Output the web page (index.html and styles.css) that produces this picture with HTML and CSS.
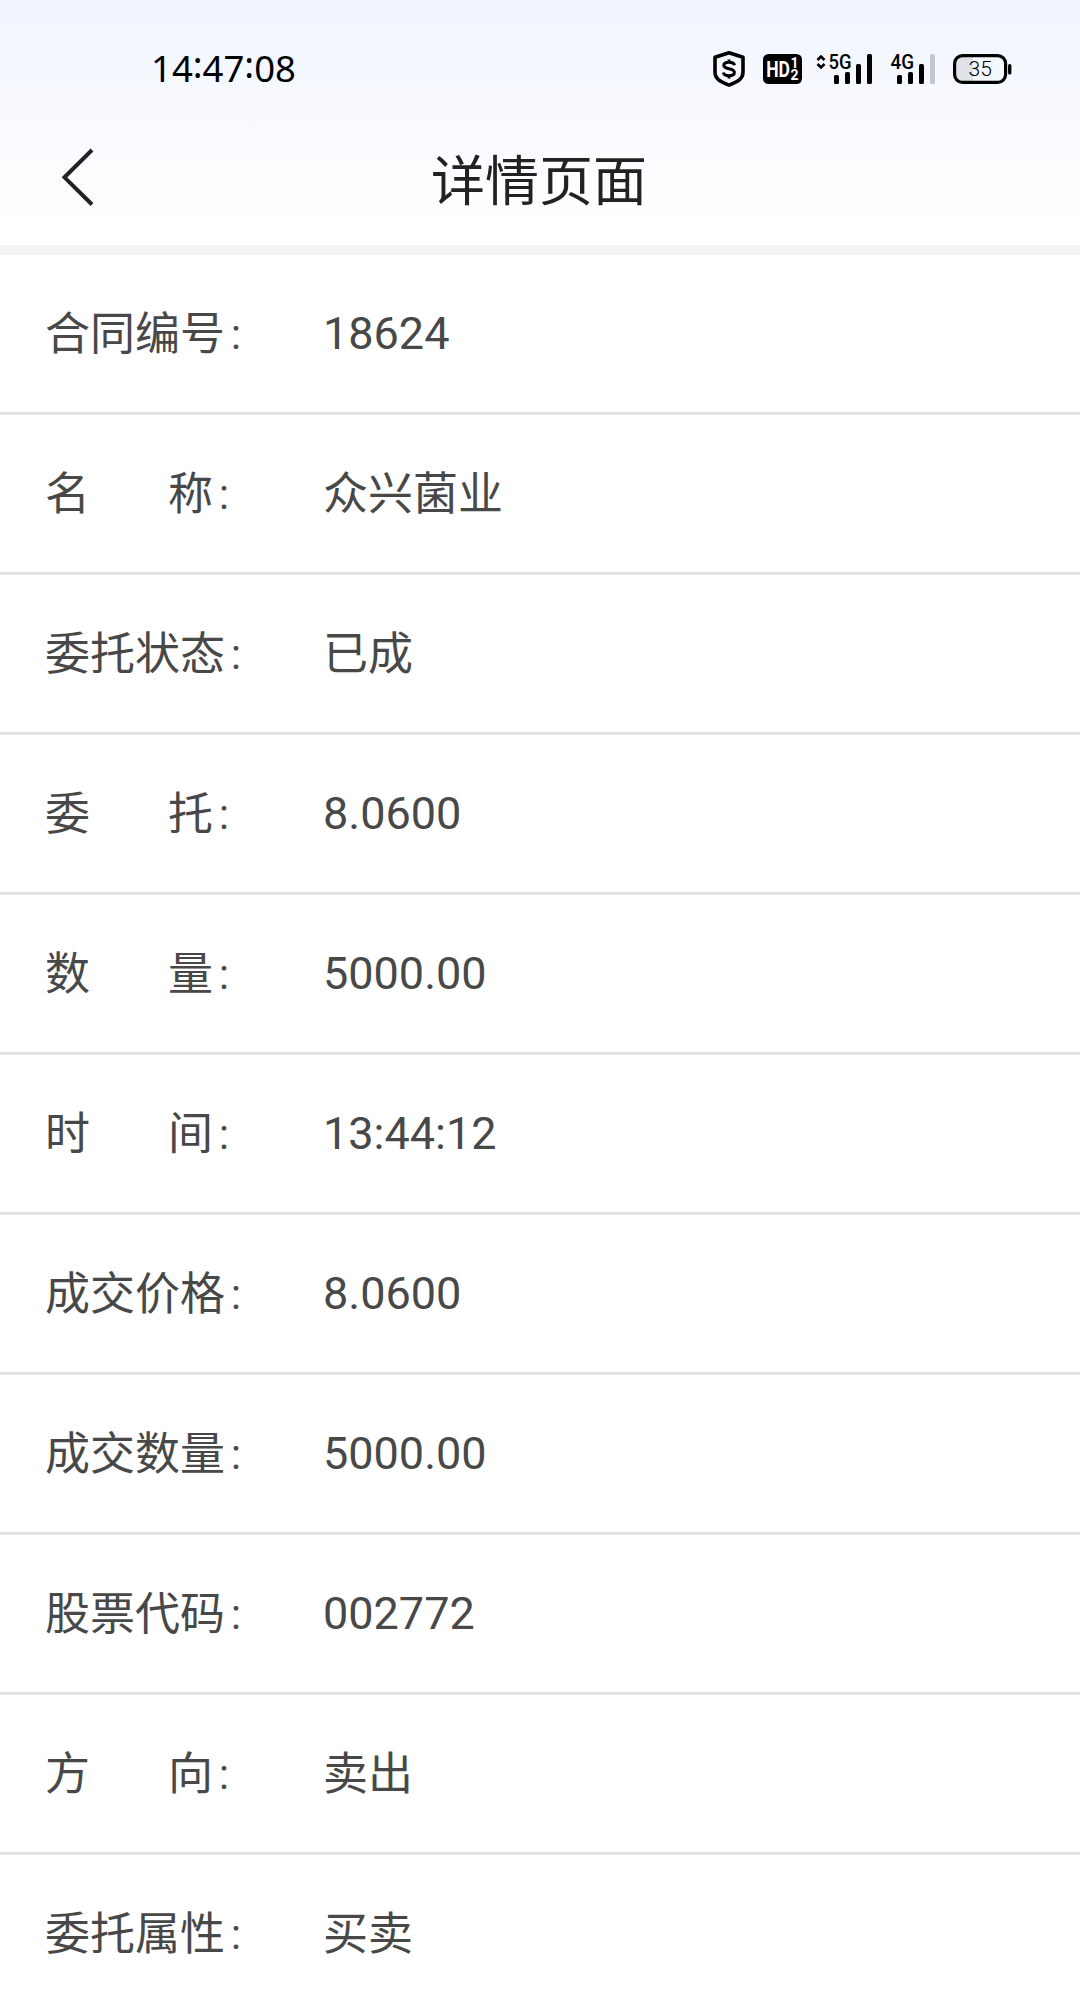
FILE: index.html
```
<!DOCTYPE html>
<html lang="zh-CN">

<head>
    <meta charset="UTF-8">
    <meta name="viewport" content="width=device-width, initial-scale=1.0">
    <title>详情页面</title>
    <link rel="stylesheet" href="styles.css">
</head>

<body>
    <header class="header">
        <div class="status">
            <div class="time">14<span class="colon">:</span>47<span class="colon">:</span>08</div>
            <div class="icons">
                <svg class="shield" width="34" height="38" viewBox="0 0 34 38">
                    <path d="M17 2.8 L31 7.3 V22 C31 29 26 31.5 17 35.2 C8 31.5 3 29 3 22 V7.3 Z" fill="none" stroke="#000" stroke-width="3.6" stroke-linejoin="round" />
                    <path d="M22.5 15.2 C22 12.6 19.8 12.2 17 12.2 C13.5 12.2 11.8 13.3 11.8 15.3 C11.8 17.7 14 18.2 17 18.8 C20.3 19.4 22.4 20.2 22.4 22.6 C22.4 24.8 20.3 25.8 17 25.8 C14 25.8 11.8 25 11.4 22.6 M17 9.5 V12 M17 26 V28.5" fill="none" stroke="#000" stroke-width="3" />
                </svg>
                <svg class="hd" width="39" height="30" viewBox="0 0 39 30">
                    <rect width="39" height="30" rx="5.5" />
                    <g fill="#fff" font-weight="700">
                        <text x="3.2" y="22.7" font-size="21.5" textLength="23.8" lengthAdjust="spacingAndGlyphs">HD</text>
                        <text x="27.4" y="14" font-size="14">1</text>
                        <text x="27.4" y="25.5" font-size="14">2</text>
                    </g>
                </svg>
                <svg class="signal5" width="57" height="30" viewBox="0 0 57 30">
                    <path d="M1.5 6 L5 2.5 L8.5 6 M1.5 10 L5 13.5 L8.5 10" fill="none" stroke="#000" stroke-width="2.6" />
                    <text x="12.5" y="14.5" font-size="20" font-weight="500" textLength="23" lengthAdjust="spacingAndGlyphs">5G</text>
                    <rect x="18" y="21" width="5" height="9" rx="1.6" />
                    <rect x="29" y="18" width="5" height="12" rx="1.6" />
                    <rect x="40" y="10" width="5" height="20" rx="1.6" />
                    <rect x="51" y="0" width="5" height="30" rx="1.6" />
                </svg>
                <svg class="signal4" width="45" height="30" viewBox="0 0 45 30">
                    <text x="0.5" y="14.5" font-size="20" font-weight="500" textLength="23.5" lengthAdjust="spacingAndGlyphs">4G</text>
                    <rect x="7" y="21" width="5" height="9" rx="1.6" />
                    <rect x="18" y="18" width="5" height="12" rx="1.6" />
                    <rect x="29" y="10" width="5" height="20" rx="1.6" />
                    <rect x="40" y="0" width="5" height="30" rx="1.6" fill="#c3c6cc" />
                </svg>
                <svg class="battery" width="59" height="30" viewBox="0 0 59 30">
                    <path d="M10 2 H20 V28 H10 Q2 28 2 20 V10 Q2 2 10 2 Z" fill="#dfe2e7" />
                    <rect x="1.6" y="1.6" width="51" height="26.8" rx="8" fill="none" stroke="#000" stroke-width="3.2" />
                    <rect x="55" y="10" width="3.4" height="10.5" rx="1.5" />
                    <text x="15.5" y="22" font-size="21" font-weight="300" textLength="23.5">35</text>
                </svg>
            </div>
        </div>
        <div class="nav">
            <svg class="back" width="34" height="60" viewBox="0 0 34 60">
                <path d="M32 3 L4.5 30.3 L32 57.5" fill="none" stroke="#222" stroke-width="4" />
            </svg>
            <h1 class="title">详情页面</h1>
        </div>
    </header>
    <main class="list">
        <div class="row"><div class="label">合同编号<span class="mark">：</span></div><div class="value">18624</div></div>
        <div class="row"><div class="label"><span class="wide">名</span>称<span class="mark">：</span></div><div class="value cn">众兴菌业</div></div>
        <div class="row"><div class="label">委托状态<span class="mark">：</span></div><div class="value cn">已成</div></div>
        <div class="row"><div class="label"><span class="wide">委</span>托<span class="mark">：</span></div><div class="value">8.0600</div></div>
        <div class="row"><div class="label"><span class="wide">数</span>量<span class="mark">：</span></div><div class="value">5000.00</div></div>
        <div class="row"><div class="label"><span class="wide">时</span>间<span class="mark">：</span></div><div class="value">13:44:12</div></div>
        <div class="row"><div class="label">成交价格<span class="mark">：</span></div><div class="value">8.0600</div></div>
        <div class="row"><div class="label">成交数量<span class="mark">：</span></div><div class="value">5000.00</div></div>
        <div class="row"><div class="label">股票代码<span class="mark">：</span></div><div class="value">002772</div></div>
        <div class="row"><div class="label"><span class="wide">方</span>向<span class="mark">：</span></div><div class="value cn">卖出</div></div>
        <div class="row"><div class="label">委托属性<span class="mark">：</span></div><div class="value cn">买卖</div></div>
    </main>
</body>

</html>
```
FILE: styles.css
```
* {
    box-sizing: border-box;
    margin: 0;
    padding: 0;
}

body {
    width: 1080px;
    height: 1999px;
    overflow: hidden;
    background: #fff;
    color: #484848;
    font-family: Roboto, "Noto Sans CJK SC", sans-serif;
}

svg {
    overflow: visible;
}

.header {
    height: 255px;
    border-bottom: 10px solid #f4f4f4;
    background: linear-gradient(#eff4ff, #f8faff 45%, #fff 95%);
}

.status {
    display: flex;
    justify-content: space-between;
    height: 110px;
    padding: 46px 68px 0 151px;
}

.time {
    color: #000;
    font: 36.5px/36px "Noto Sans", sans-serif;
}

.colon {
    vertical-align: 4px;
    line-height: 1;
}

.icons {
    display: flex;
    align-items: flex-start;
    padding-top: 8px;
}

.shield {
    margin: -4px 17px 0 0;
}

.hd {
    margin-right: 14px;
}

.signal5 {
    margin-right: 17px;
}

.signal4 {
    margin-right: 18px;
}

.nav {
    display: flex;
    align-items: center;
    height: 135px;
    padding: 0 60px;
}

.back {
    margin-top: -2px;
}

.title {
    flex: 1;
    margin: 10px 36px 0 0;
    color: #222;
    font-size: 54px;
    font-weight: 400;
    line-height: 80px;
    text-align: center;
}

.row {
    display: flex;
    align-items: center;
    height: 160px;
    padding-left: 45px;
    border-bottom: 3px solid #e2e2e2;
    font-size: 45px;
    line-height: 66px;
}

.label {
    width: 278px;
    padding-top: 3px;
    white-space: nowrap;
}

.cn {
    padding-top: 3px;
}

.wide {
    margin-right: 78px;
}

/* the full-width colon is lighter than the label text */
.mark {
    margin-left: 2px;
    font-size: 36px;
    font-weight: 300;
    line-height: 1;
    vertical-align: 1px;
}
```
